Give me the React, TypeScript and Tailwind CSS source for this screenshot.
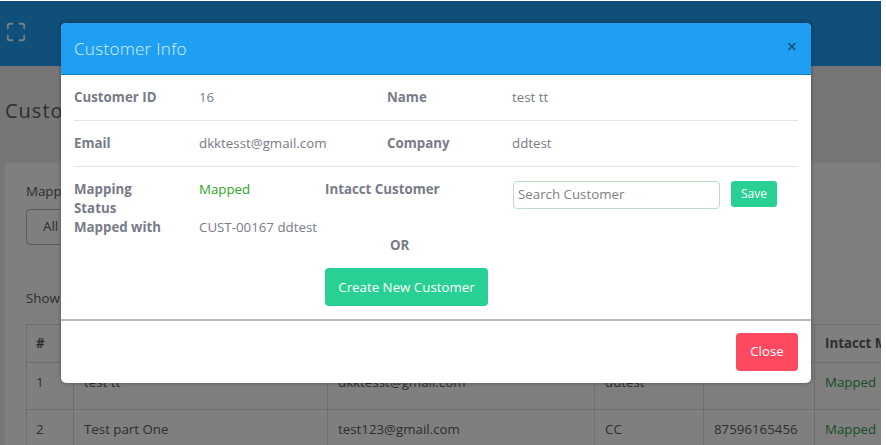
import { Maximize } from "lucide-react";

const rows = [
  { id: "1", name: "test tt", email: "dkktesst@gmail.com", company: "ddtest", phone: "", status: "Mapped" },
  { id: "2", name: "Test part One", email: "test123@gmail.com", company: "CC", phone: "87596165456", status: "Mapped" },
];

function Background() {
  return (
    <div className="h-[444px] overflow-hidden bg-[#ececec] text-[#5a5d60]">
      <div className="flex h-[65px] items-center bg-[#1e9ff2] pl-[5px] pb-[4px]">
        <Maximize size={22} strokeWidth={2} className="text-white" />
      </div>
      <h1 className="pl-[5px] pt-[31px] text-[20px] leading-[28px] tracking-[1px]">Customers</h1>
      <div className="ml-[5px] mt-[38px] bg-white pl-[21px] pt-[18px]">
        <p className="text-[13.3px] leading-[20px]">Mapping Status</p>
        <div className="mt-[8px] flex h-[36px] w-[120px] items-center rounded-[4px] border border-[#b5b5b5] pl-[16px] text-[13.3px]">
          All
        </div>
        <p className="mt-[43px] text-[13.3px] leading-[20px]">Show 10 entries</p>
        <table className="mt-[16px] w-[900px] table-fixed border-collapse text-[13.3px]">
          <colgroup>
            <col className="w-[47px]" />
            <col className="w-[254px]" />
            <col className="w-[267px]" />
            <col className="w-[109px]" />
            <col className="w-[111px]" />
            <col className="w-[112px]" />
          </colgroup>
          <thead>
            <tr className="h-[38px] font-bold">
              <th className="border border-[#dcdcdc] pl-[9px] text-left">#</th>
              <th className="border border-[#dcdcdc] pl-[10px] text-left">Name</th>
              <th className="border border-[#dcdcdc] pl-[10px] text-left">Email</th>
              <th className="border border-[#dcdcdc] pl-[10px] text-left">Company</th>
              <th className="border border-[#dcdcdc] pl-[10px] text-left">Phone</th>
              <th className="whitespace-nowrap border border-[#dcdcdc] pl-[10px] text-left">Intacct Mapped</th>
            </tr>
          </thead>
          <tbody>
            {rows.map((r) => (
              <tr key={r.id} className="h-[47px]">
                <td className="border border-[#dcdcdc] pl-[9px] pt-[10px] align-top">{r.id}</td>
                <td className="border border-[#dcdcdc] pl-[10px] pt-[10px] align-top">{r.name}</td>
                <td className="border border-[#dcdcdc] pl-[10px] pt-[10px] align-top">{r.email}</td>
                <td className="border border-[#dcdcdc] pl-[10px] pt-[10px] align-top">{r.company}</td>
                <td className="border border-[#dcdcdc] pl-[10px] pt-[10px] align-top">{r.phone}</td>
                <td className="border border-[#dcdcdc] pl-[10px] pt-[10px] align-top text-[#2e9e4a]">{r.status}</td>
              </tr>
            ))}
          </tbody>
        </table>
      </div>
    </div>
  );
}

function Modal() {
  return (
    <div className="absolute left-[61px] top-[22px] w-[750px] overflow-hidden rounded-[5px] bg-white text-[13.3px] text-[#787b88] shadow-[0_0_4px_rgba(0,0,0,0.35)]">
      <div className="flex h-[52px] items-center justify-between border-b border-[#1a7fc0] bg-[#1e9ff2] pl-[13px] pr-[14px]">
        <h2 className="text-[17px] font-light tracking-[0.3px] text-[#d9effd]">Customer Info</h2>
        <span className="mb-[5px] text-[18px] font-semibold leading-none text-[#13557f]">×</span>
      </div>

      <div className="h-[244px] px-[13px]">
        <div className="grid h-[46px] grid-cols-[125px_188px_125px_1fr] items-center border-b border-[#e4e5e7]">
          <span className="font-bold">Customer ID</span>
          <span>16</span>
          <span className="font-bold">Name</span>
          <span>test tt</span>
        </div>
        <div className="grid h-[46px] grid-cols-[125px_188px_125px_1fr] items-center border-b border-[#e4e5e7]">
          <span className="font-bold">Email</span>
          <span>dkktesst@gmail.com</span>
          <span className="font-bold">Company</span>
          <span>ddtest</span>
        </div>

        <div className="flex pt-[14px]">
          <div className="-mt-[1px] grid w-[251px] grid-cols-[125px_1fr] content-start leading-[19px]">
            <span className="max-w-[80px] font-bold">Mapping Status</span>
            <span className="text-[#2aa52a]">Mapped</span>
            <span className="font-bold">Mapped with</span>
            <span>CUST-00167 ddtest</span>
          </div>
          <div className="flex flex-col items-start">
            <div className="flex items-start">
              <span className="-mt-[1px] w-[188px] font-bold leading-[19px]">Intacct Customer</span>
              <input
                readOnly
                placeholder="Search Customer"
                className="h-[28px] w-[207px] rounded-[4px] border border-[#bcdcc8] px-[4px] pb-[3px] text-[13.3px] placeholder:text-[#7d8085]"
              />
              <button className="ml-[11px] h-[26px] w-[46px] rounded-[3px] bg-[#28d094] text-[12px] text-white">
                Save
              </button>
            </div>
            <span className="ml-[65px] mt-[27px] font-bold leading-[19px]">OR</span>
            <button className="mt-[13px] h-[38px] w-[163px] rounded-[4px] bg-[#28d094] pt-[1px] text-[13.3px] text-white">
              Create New Customer
            </button>
          </div>
        </div>
      </div>

      <div className="flex h-[64px] items-start justify-end border-t-2 border-[#b4b7bf] pr-[13px] pt-[12px]">
        <button className="h-[38px] w-[62px] rounded-[4px] bg-[#ff4961] text-[13.3px] text-white">Close</button>
      </div>
    </div>
  );
}

export default function App() {
  return (
    <div className="h-[445px] w-[886px] overflow-hidden bg-white pt-px font-['Open_Sans',sans-serif]">
      <div className="relative w-[881px] overflow-hidden">
        <Background />
        <div className="absolute inset-0 bg-black/50" />
        <Modal />
      </div>
    </div>
  );
}
